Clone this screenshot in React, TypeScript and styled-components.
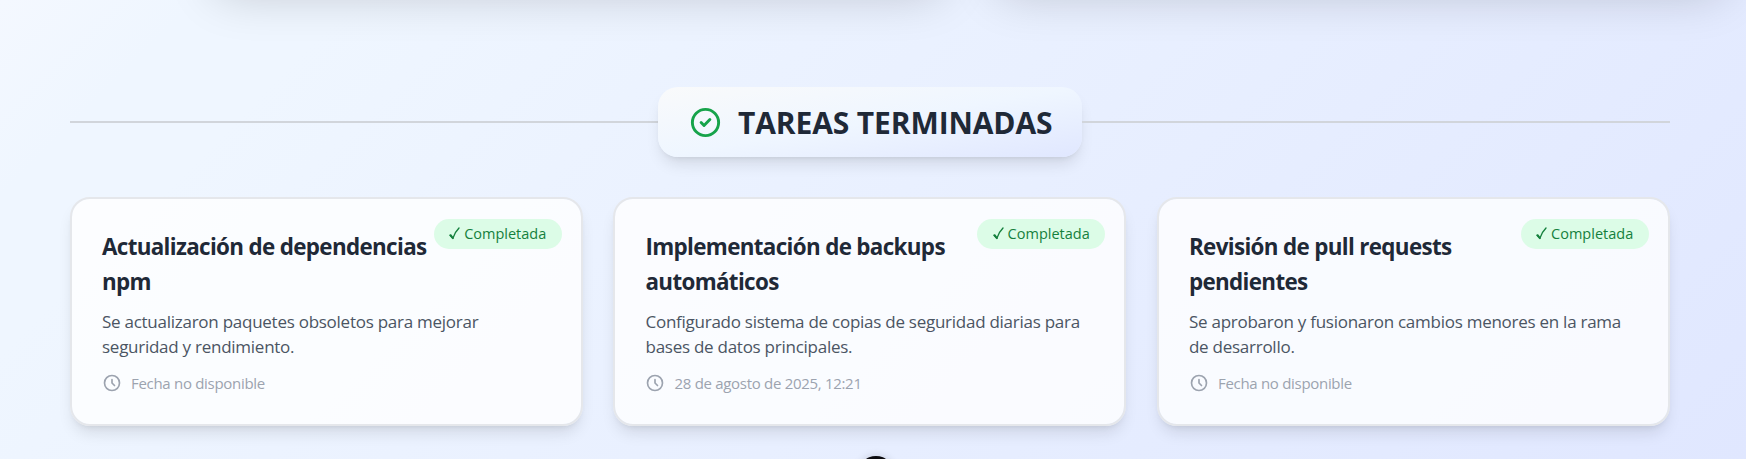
import React from "react";
import styled, { createGlobalStyle } from "styled-components";

const GlobalStyle = createGlobalStyle`
  * { box-sizing: border-box; }
  html, body { margin: 0; height: 459px; overflow: hidden; }
  body { font-family: "Segoe UI", "Open Sans", "Noto Sans", sans-serif; }
`;

const Page = styled.main`
  position: relative;
  height: 459px;
  overflow: hidden;
  padding: 87px 76px 0 70px;
  background: linear-gradient(135deg, #f4f8ff 0%, #eff6ff 9%, #eff6ff 16%, #e0e7ff 100%);
`;

const PanelShadow = styled.div<{ $left: number; $width: number }>`
  position: absolute;
  top: -210px;
  left: ${(p) => p.$left}px;
  width: ${(p) => p.$width}px;
  height: 190px;
  border-radius: 24px;
  box-shadow: 0 25px 50px -12px rgba(0, 0, 0, 0.2);
`;

const Heading = styled.header`
  display: flex;
  align-items: center;
  height: 70px;
  margin-bottom: 40px;
`;

const Rule = styled.div`
  flex: 1;
  height: 2px;
  background: #d1d5db;
`;

const HeadingBadge = styled.div`
  display: flex;
  align-items: center;
  width: 424px;
  height: 70px;
  padding-left: 30px;
  gap: 15px;
  border-radius: 20px;
  background: linear-gradient(to bottom right, #f9fafb, #eff6ff 50%, #e0e7ff);
  box-shadow: 0 10px 15px -3px rgba(0, 0, 0, 0.1), 0 4px 6px -4px rgba(0, 0, 0, 0.1);
`;

const HeadingText = styled.h2`
  margin: 2px 0 0;
  font-size: 30px;
  line-height: 36px;
  letter-spacing: -0.12px;
  font-weight: 700;
  color: #1f2937;
  white-space: nowrap;
`;

const Grid = styled.section`
  display: grid;
  grid-template-columns: repeat(3, 512.7px);
  gap: 30.8px;
`;

const Card = styled.article`
  position: relative;
  height: 229px;
  padding: 30px 30px 0;
  border: 2px solid #e5e7eb;
  border-radius: 20px;
  background: rgba(255, 255, 255, 0.78);
  background-clip: padding-box;
  box-shadow: 0 10px 15px -3px rgba(0, 0, 0, 0.1), 0 4px 6px -4px rgba(0, 0, 0, 0.1);
`;

const Status = styled.span`
  position: absolute;
  top: 20px;
  right: 19px;
  display: flex;
  align-items: center;
  justify-content: center;
  gap: 4px;
  width: 128px;
  height: 30px;
  padding-bottom: 1px;
  border-radius: 15px;
  background: #dcfce7;
  color: #15803d;
  font-size: 14.5px;
  font-weight: 500;
`;

const Title = styled.h3`
  margin: 0 0 10px;
  font-size: 22.4px;
  line-height: 35px;
  letter-spacing: -0.66px;
  font-weight: 700;
  color: #1f2937;
  white-space: pre;
`;

const Description = styled.p`
  margin: 0 0 14px;
  font-size: 17px;
  line-height: 25px;
  letter-spacing: -0.26px;
  color: #4b5563;
  white-space: pre;
`;

const Meta = styled.div`
  display: flex;
  align-items: center;
  gap: 9px;
  height: 20px;
  font-size: 15px;
  letter-spacing: -0.3px;
  color: #9ca3af;
`;

const Bubble = styled.div`
  position: absolute;
  left: 858px;
  top: 456px;
  width: 36px;
  height: 36px;
  border-radius: 50%;
  background: #0b0b0f;
  box-shadow: 0 0 8px rgba(0, 0, 0, 0.15);
`;

const tasks = [
  {
    title: "Actualización de dependencias\nnpm",
    text: "Se actualizaron paquetes obsoletos para mejorar\nseguridad y rendimiento.",
    date: "Fecha no disponible",
  },
  {
    title: "Implementación de backups\nautomáticos",
    text: "Configurado sistema de copias de seguridad diarias para\nbases de datos principales.",
    date: "28 de agosto de 2025, 12:21",
  },
  {
    title: "Revisión de pull requests\npendientes",
    text: "Se aprobaron y fusionaron cambios menores en la rama\nde desarrollo.",
    date: "Fecha no disponible",
  },
];

const stroke = { fill: "none", stroke: "currentColor", strokeLinecap: "round", strokeLinejoin: "round" } as const;

export default function App() {
  return (
    <Page>
      <GlobalStyle />
      <PanelShadow $left={204} $width={750} />
      <PanelShadow $left={986} $width={750} />
      <Heading>
        <Rule />
        <HeadingBadge>
          <svg width="35" height="35" viewBox="0 0 24 24" color="#16a34a" strokeWidth="2" {...stroke}>
            <path d="M9 12l2 2 4-4m6 2a9 9 0 1 1-18 0 9 9 0 0 1 18 0z" />
          </svg>
          <HeadingText>TAREAS TERMINADAS</HeadingText>
        </HeadingBadge>
        <Rule />
      </Heading>
      <Grid>
        {tasks.map((t) => (
          <Card key={t.title}>
            <Status>
              <svg width="11" height="13" viewBox="0 0 11 13" strokeWidth="1.4" {...stroke}>
                <path d="M1 8.2L3.8 11.4C5 7.5 7 4 10 1" />
                <path d="M1.6 8.2L3.8 11" strokeWidth="2" />
              </svg>
              <span>Completada</span>
            </Status>
            <Title>{t.title}</Title>
            <Description>{t.text}</Description>
            <Meta>
              <svg width="20" height="20" viewBox="0 0 24 24" strokeWidth="2" {...stroke}>
                <path d="M12 8v4l3 3m6-3a9 9 0 1 1-18 0 9 9 0 0 1 18 0z" />
              </svg>
              <span>{t.date}</span>
            </Meta>
          </Card>
        ))}
      </Grid>
      <Bubble />
    </Page>
  );
}
